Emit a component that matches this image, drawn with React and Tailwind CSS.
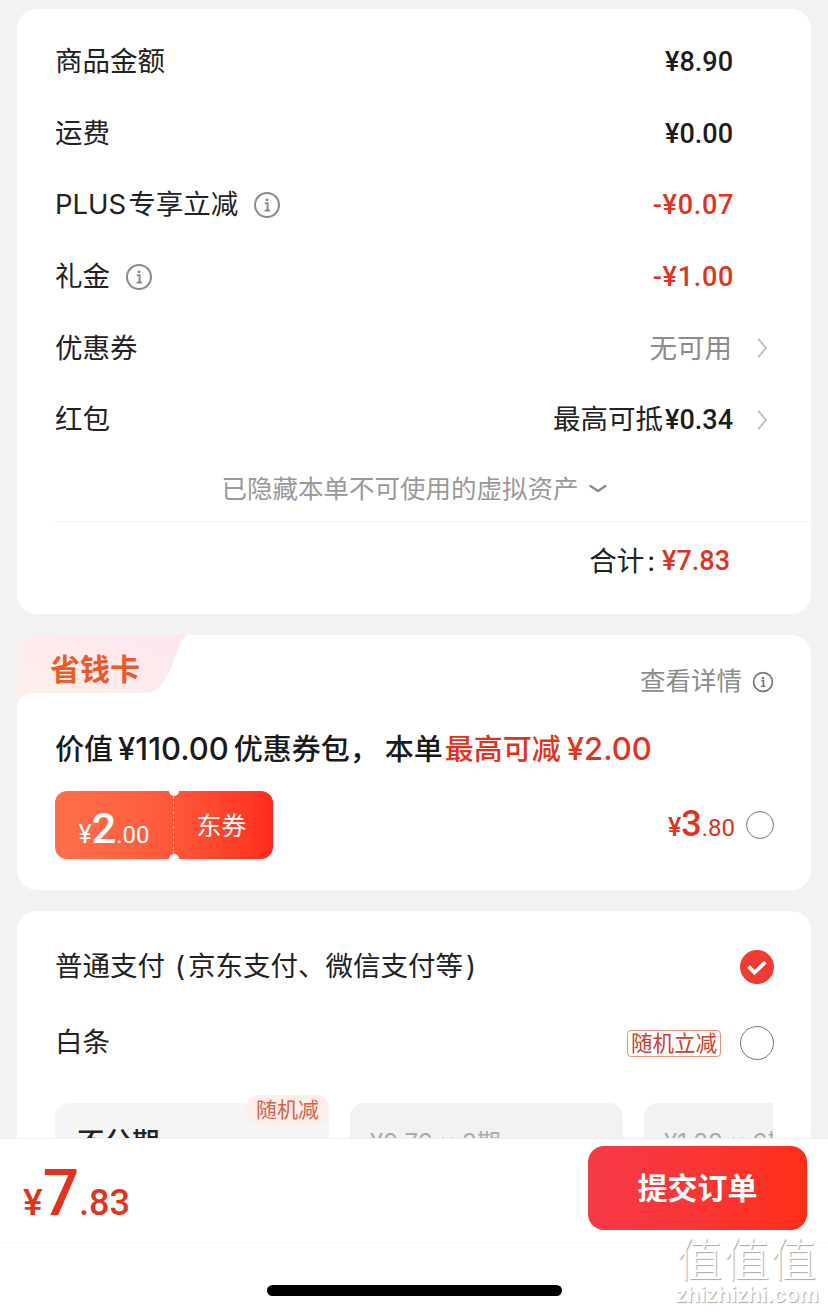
import React from "react";

const cjk = "font-['Inter','Noto_Sans_CJK_SC',sans-serif]";
const num = "font-['Roboto','Noto_Sans_CJK_SC',sans-serif]";

function InfoIcon({ size = 28, color = "#8a8a8a", sw = 2 }) {
  return (
    <svg width={size} height={size} viewBox="0 0 28 28" fill="none">
      <circle cx="14" cy="14" r="12" stroke={color} strokeWidth={sw} />
      <circle cx="14" cy="8.8" r="1.5" fill={color} />
      <path d="M11.8 12.2H14.6V19M11.6 19.4H17" stroke={color} strokeWidth={sw} />
    </svg>
  );
}

function Chevron() {
  return (
    <svg width="12" height="24" viewBox="0 0 12 24" fill="none">
      <path d="M2 2.5L10 12L2 21.5" stroke="#c4c4c4" strokeWidth="2" />
    </svg>
  );
}

function Row({ children }) {
  return <div className="flex h-[71.6px] items-center justify-between pl-[38px] pr-[43px]">{children}</div>;
}

function Amount({ children, color = "text-[#1c1c1c]" }) {
  return <span className={`${num} text-[27px] font-medium ${color}`}>{children}</span>;
}

function Discount({ children }) {
  return (
    <span className="pr-[34px] tracking-[0.7px]">
      <Amount color="text-[#e2331f]">{children}</Amount>
    </span>
  );
}

function OrderSummary() {
  return (
    <section className="mx-[17px] h-[605px] rounded-[20px] bg-white pt-[17px]">
      <Row>
        <span>商品金额</span>
        <span className="pr-[35px]"><Amount>¥8.90</Amount></span>
      </Row>
      <Row>
        <span>运费</span>
        <span className="pr-[35px]"><Amount>¥0.00</Amount></span>
      </Row>
      <Row>
        <span className="flex items-center gap-[15px]">
          <span>PLUS<span className="ml-[2px]">专享立减</span></span>
          <InfoIcon />
        </span>
        <Discount>-¥0.07</Discount>
      </Row>
      <Row>
        <span className="flex items-center gap-[15px]">礼金 <InfoIcon /></span>
        <Discount>-¥1.00</Discount>
      </Row>
      <Row>
        <span>优惠券</span>
        <span className="flex items-center gap-[24px] text-[#8c8c8c]">无可用 <Chevron /></span>
      </Row>
      <Row>
        <span>红包</span>
        <span className="flex items-center gap-[23px]">
          <span>最高可抵<span className="ml-[2px]"><Amount>¥0.34</Amount></span></span>
          <Chevron />
        </span>
      </Row>
      <div className="flex h-[65px] items-center justify-center gap-[10px] pt-[2px] text-[25.5px] text-[#999999]">
        已隐藏本单不可使用的虚拟资产
        <svg width="18" height="10" viewBox="0 0 18 10" fill="none">
          <path d="M1.5 2L9 7L16.5 2" stroke="#8c8c8c" strokeWidth="2.4" strokeLinecap="round" strokeLinejoin="round" />
        </svg>
      </div>
      <div className="ml-[36px] flex h-[80px] items-center justify-end border-t border-[#f2f2f2] pt-[1px] pr-[81px]">
        <span>合计</span>
        <span className="mr-[7px] ml-[3px]">:</span>
        <Amount color="text-[#e2331f]">¥7.83</Amount>
      </div>
    </section>
  );
}

function Coupon() {
  return (
    <div className="relative flex h-[68px] w-[218px] items-center rounded-[12px] bg-gradient-to-r from-[#ff6f4b] via-[#ff5a3c] to-[#ff2a1c] text-white">
      <span className="absolute top-[-5px] left-[114px] h-[10px] w-[10px] rounded-full bg-white" />
      <span className="absolute bottom-[-5px] left-[114px] h-[10px] w-[10px] rounded-full bg-white" />
      <div className={`${num} flex h-[58px] w-[119px] items-baseline justify-center border-r border-dashed border-white/40`}>
        <span className="mt-[10px] text-[25px]">¥</span>
        <span className="text-[43px] font-medium">2</span>
        <span className="text-[24px]">.00</span>
      </div>
      <span className="flex-1 pt-[3px] pr-[4px] text-center text-[25px]">东券</span>
    </div>
  );
}

function SavingCard() {
  return (
    <section className="relative mx-[17px] mt-[21px] h-[255px] overflow-hidden rounded-[20px] bg-white">
      {/* tab behind the title */}
      <svg className="absolute top-0 left-0" width="172" height="80" viewBox="0 0 172 80">
        <defs>
          <linearGradient id="tabFill" x1="0" y1="1" x2="1" y2="0">
            <stop offset="0" stopColor="#fff0ea" />
            <stop offset="1" stopColor="#fde6ee" />
          </linearGradient>
        </defs>
        <path d="M0 20Q0 0 20 0H171C158 3 156 58 128 58H18Q0 58 0 78Z" fill="url(#tabFill)" />
      </svg>
      <div className="absolute top-[14px] left-[33px] text-[30px] leading-[40px] font-bold text-[#ed5a2a]">省钱卡</div>
      <div className="flex h-[65px] items-end justify-end gap-[10px] pr-[37px] pb-[1px] text-[25.5px] leading-[36px] text-[#8c8c8c]">
        查看详情
        <span className="pb-[6px]"><InfoIcon size={22} color="#777777" sw={2.2} /></span>
      </div>
      <div className="mt-[30px] h-[38px] pl-[38px] text-[29px] leading-[38px] font-medium whitespace-nowrap text-[#1a1a1a]">
        价值<span className="mx-[5px] text-[31px]">¥110.00</span>优惠券包<span className="mr-[6px]">{"\uFF0C"}</span>本单
        <span className="ml-[2px] text-[#e2331f]">最高可减<span className="ml-[6px] text-[31px]">¥2.00</span></span>
      </div>
      <div className="mt-[23px] flex items-center justify-between pr-[37px] pl-[38px]">
        <Coupon />
        <div className="flex items-center gap-[11px]">
          <span className={`${num} flex items-baseline text-[#e2331f]`}>
            <span className="text-[25px] font-medium">¥</span>
            <span className="text-[36px] leading-[40px] font-medium">3</span>
            <span className="text-[24px]">.80</span>
          </span>
          <span className="h-[28px] w-[28px] rounded-full border border-[#777777]" />
        </div>
      </div>
    </section>
  );
}

function PaymentCard() {
  return (
    <section className="mx-[17px] mt-[21px] rounded-t-[20px] bg-white pt-[36px] pl-[38px]">
      <div className="flex h-[40px] items-center justify-between pr-[37px]">
        <span>
          普通支付<span className="mr-[3px] ml-[10px]">(</span>京东支付、微信支付等<span className="ml-[3px]">)</span>
        </span>
        <svg width="34" height="34" viewBox="0 0 34 34">
          <circle cx="17" cy="17" r="17" fill="#ee3b34" />
          <path d="M8.5 16.5L14.5 22.5L25.5 12" stroke="#fff" strokeWidth="3.8" fill="none" />
        </svg>
      </div>
      <div className="mt-[36px] flex h-[40px] items-center justify-between pr-[37px]">
        <span>白条</span>
        <div className="flex items-center gap-[19px]">
          <span className="h-[27px] rounded-[4px] border border-[#e8907f] px-[3px] text-[21.5px] leading-[25px] text-[#c9402f]">随机立减</span>
          <span className="h-[34px] w-[34px] rounded-full border border-[#777777]" />
        </div>
      </div>
      <div className="mt-[32px] mr-[38px] flex gap-[21px] overflow-hidden pt-[8px]">
        <div className="relative h-[90px] w-[274px] shrink-0 rounded-[14px] bg-[#f5f5f5] pt-[19px] pl-[22px] font-medium">
          不分期
          <span className="absolute top-[-8px] right-0 rounded-[12px] bg-[#fdeeea] px-[10px] text-[21px] leading-[30px] font-normal text-[#d9604e]">随机减</span>
        </div>
        <div className="h-[90px] w-[273px] shrink-0 rounded-[14px] bg-[#f2f2f2] pt-[22px] pl-[20px] text-[24px] text-[#aaaaaa]">¥2.76 x 3期</div>
        <div className="h-[90px] w-[273px] shrink-0 rounded-[14px] bg-[#f2f2f2] pt-[22px] pl-[20px] text-[24px] text-[#aaaaaa]">¥1.38 x 6期</div>
      </div>
    </section>
  );
}

function Footer() {
  return (
    <footer className="relative h-[176px] shrink-0 border-t border-[#f0f0f0] bg-white">
      <div className="flex h-[104px] items-start justify-between border-b border-[#f7f7f7] pt-[7px] pr-[21px] pl-[23px]">
        <div className={`${num} flex items-baseline pt-[13px] text-[#e2331f]`}>
          <span className="text-[37px] font-medium">¥</span>
          <span className="text-[64px] leading-[70px] font-medium">7</span>
          <span className="text-[36px] font-medium">.83</span>
        </div>
        <button className="h-[84px] w-[219px] rounded-[16px] bg-gradient-to-r from-[#f53a48] to-[#ff2f14] text-[30px] font-semibold text-white">
          提交订单
        </button>
      </div>
      <div className="flex h-[71px] justify-center pt-[42px]">
        <div className="h-[11px] w-[295px] rounded-full bg-black" />
      </div>
      {/* site watermark */}
      <div className="absolute top-[96px] right-[8px] flex w-[146px] flex-col items-center whitespace-nowrap text-white [text-shadow:1px_1px_1px_#a8a8a8]">
        <span className="text-[46px] leading-[48px] font-light tracking-[1px]">值值值</span>
        <span className="font-['Liberation_Sans',sans-serif] text-[22px] leading-[24px] font-bold">zhizhizhi.com</span>
      </div>
    </footer>
  );
}

export default function App() {
  return (
    <div className={`${cjk} flex h-[1314px] w-[828px] flex-col overflow-hidden bg-[#f2f2f2] text-[27.5px] text-[#222222]`}>
      <main className="min-h-0 flex-1 overflow-hidden pt-[9px]">
        <OrderSummary />
        <SavingCard />
        <PaymentCard />
      </main>
      <Footer />
    </div>
  );
}
